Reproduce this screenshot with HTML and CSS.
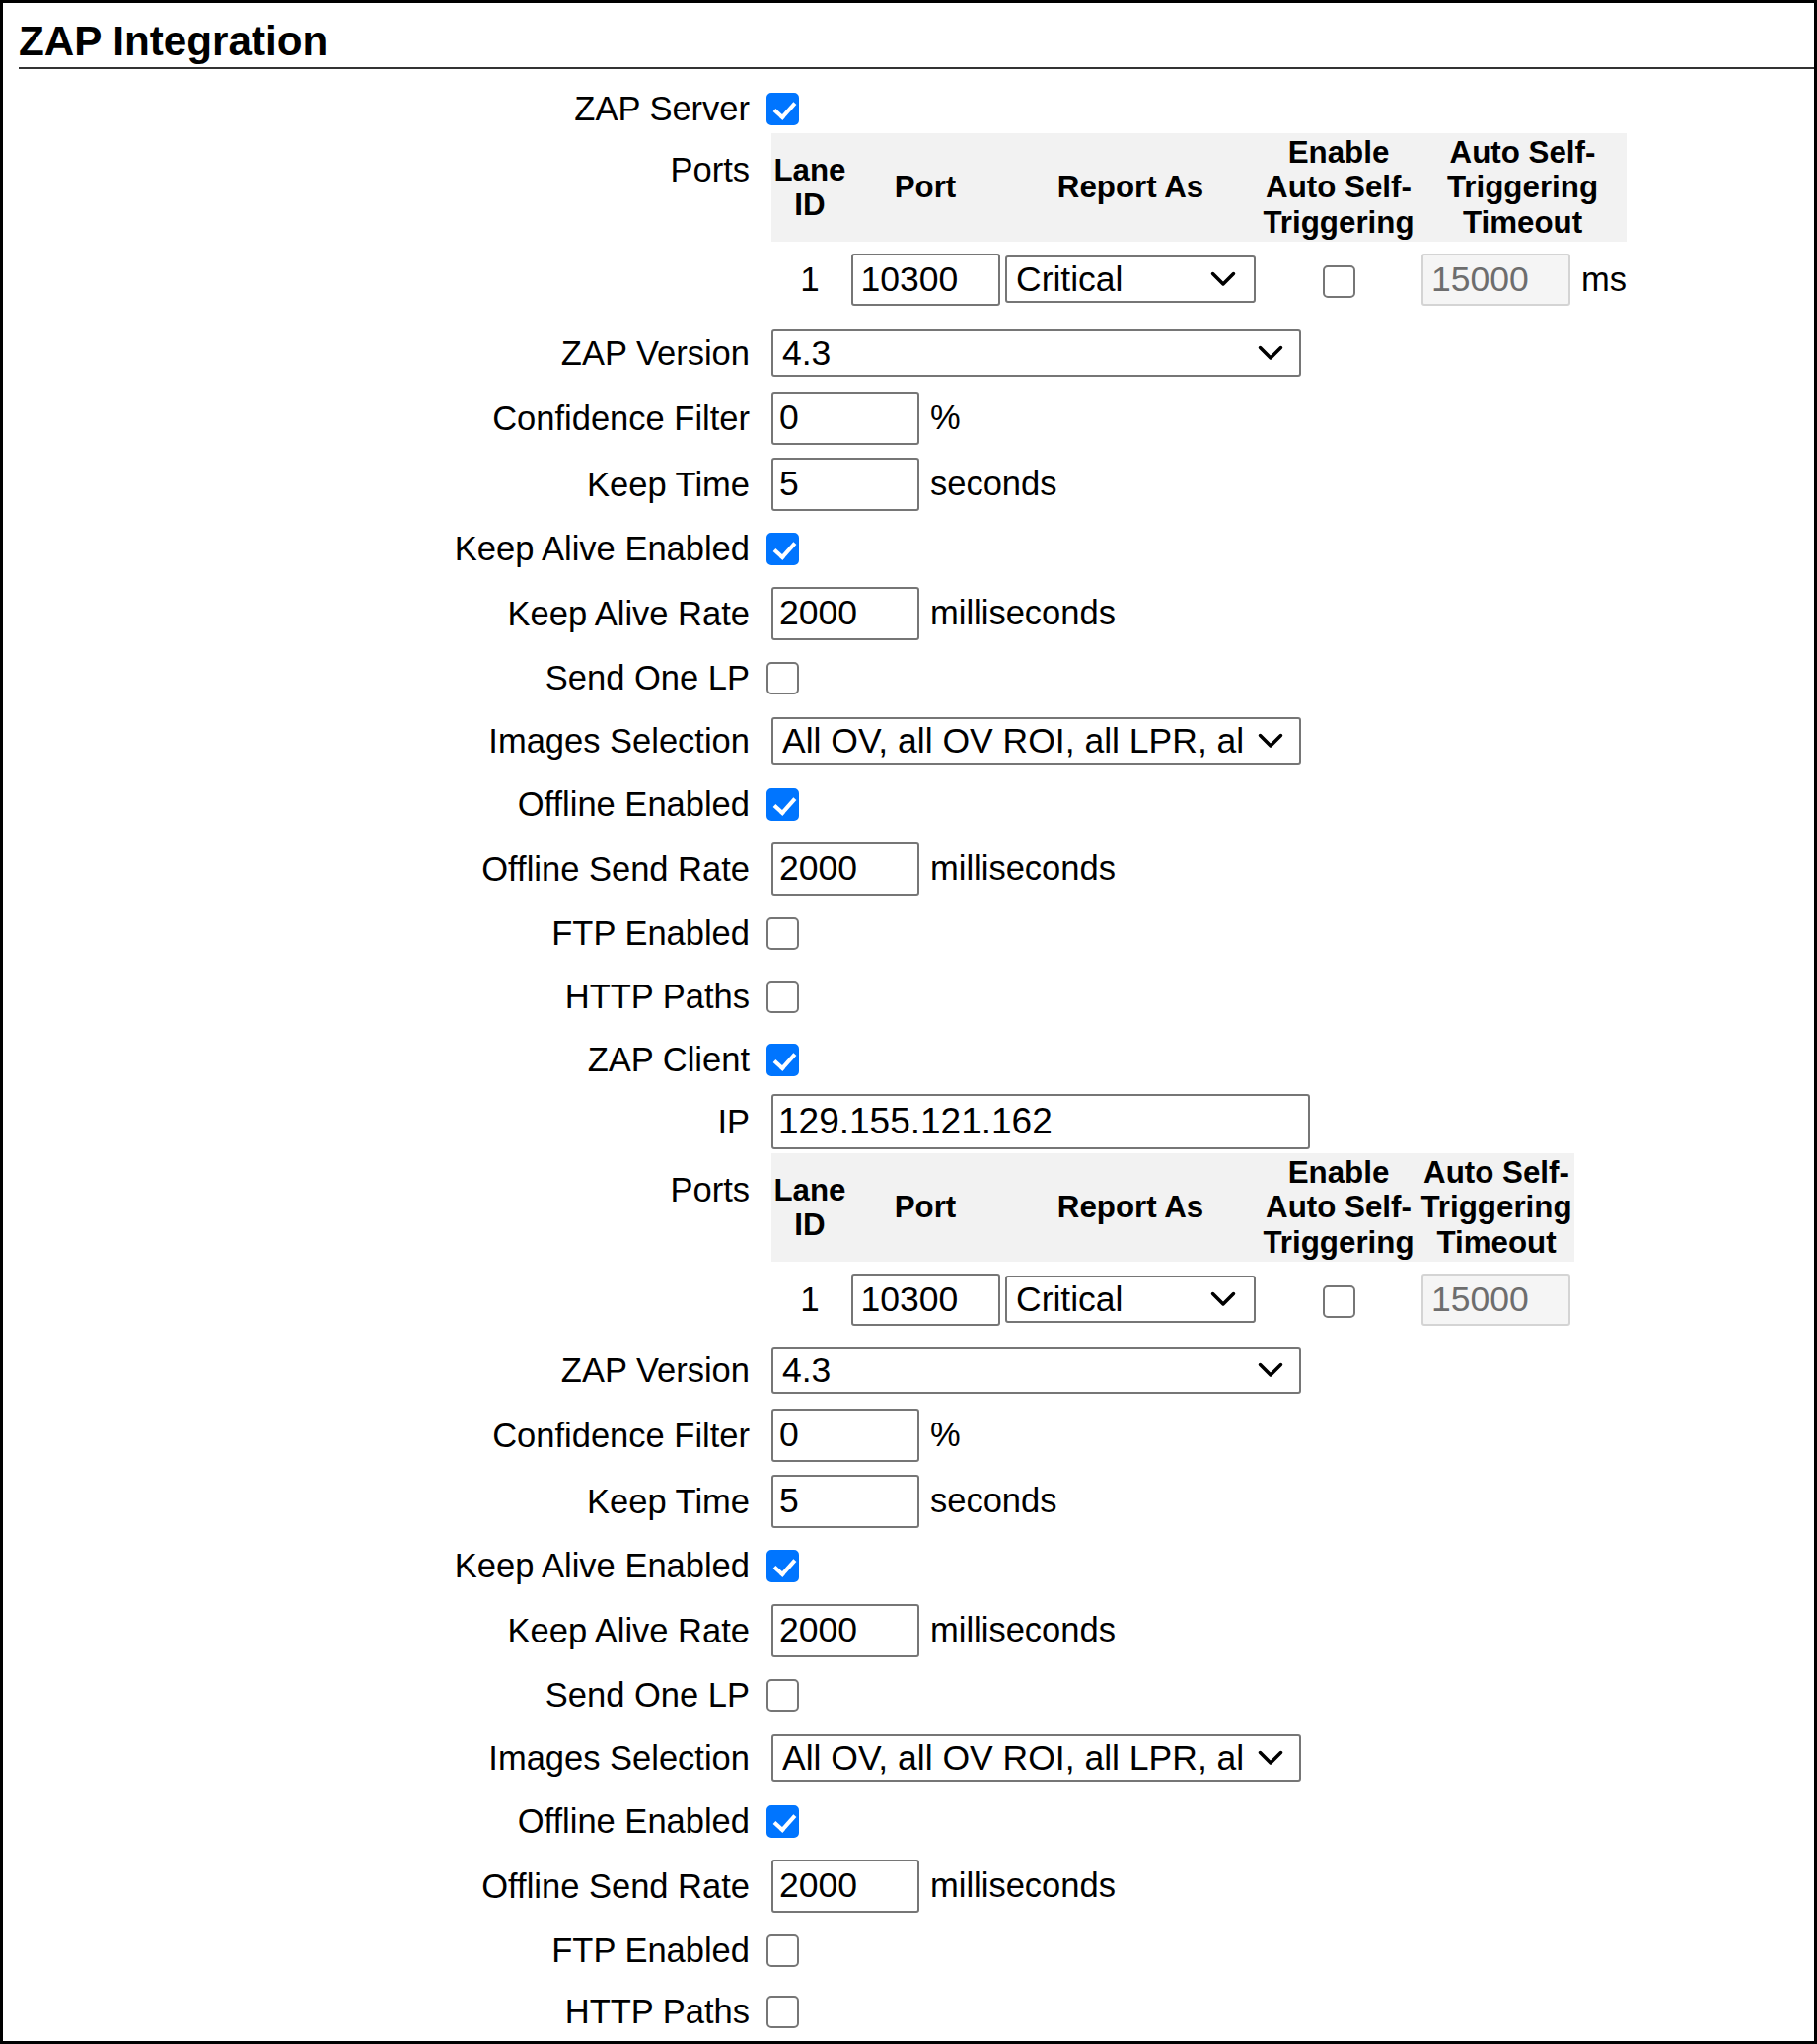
FILE: index.html
```html
<!DOCTYPE html>
<html lang="en">
<head>
<meta charset="utf-8">
<title>ZAP Integration</title>
<link rel="stylesheet" href="styles.css">
</head>
<body>
<div class="frame">
  <h2 class="title">ZAP Integration</h2>
  <div class="form">
    <div class="row h48"><div class="lbl">ZAP Server</div><input type="checkbox" class="cb" checked></div>
    <div class="row hp1">
      <div class="lbl lbl-top">Ports</div>
      <table class="ports ports1">
        <colgroup><col class="c1"><col class="c2"><col class="c3"><col class="c4"><col></colgroup>
        <thead><tr><th>Lane ID</th><th>Port</th><th>Report As</th><th>Enable Auto Self-Triggering</th><th>Auto Self-Triggering Timeout</th></tr></thead>
        <tbody><tr>
          <td class="center num">1</td>
          <td class="center"><input class="txt w-port" type="text" value="10300"></td>
          <td class="center"><div class="select w-report"><span class="sel-text">Critical</span><svg class="chev" viewBox="0 0 26 16" width="26" height="16"><path d="M2.5 2.5 L13 13 L23.5 2.5"/></svg></div></td>
          <td class="center"><input type="checkbox" class="cb cb-cell"></td>
          <td class="left-pad"><input class="txt dis w-port" type="text" value="15000" disabled><span class="unit unit-ms">ms</span></td>
        </tr></tbody>
      </table>
    </div>
    <div class="row hs"><div class="lbl">ZAP Version</div><div class="select w-wide ml"><span class="sel-text">4.3</span><svg class="chev" viewBox="0 0 26 16" width="26" height="16"><path d="M2.5 2.5 L13 13 L23.5 2.5"/></svg></div></div>
    <div class="row hi"><div class="lbl">Confidence Filter</div><input class="txt w-small ml" type="text" value="0"><span class="unit">%</span></div>
    <div class="row hi"><div class="lbl">Keep Time</div><input class="txt w-small ml" type="text" value="5"><span class="unit">seconds</span></div>
    <div class="row hc"><div class="lbl">Keep Alive Enabled</div><input type="checkbox" class="cb" checked></div>
    <div class="row hi"><div class="lbl">Keep Alive Rate</div><input class="txt w-small ml" type="text" value="2000"><span class="unit">milliseconds</span></div>
    <div class="row hc"><div class="lbl">Send One LP</div><input type="checkbox" class="cb"></div>
    <div class="row hs"><div class="lbl">Images Selection</div><div class="select w-wide ml"><span class="sel-text">All OV, all OV ROI, all LPR, al</span><svg class="chev" viewBox="0 0 26 16" width="26" height="16"><path d="M2.5 2.5 L13 13 L23.5 2.5"/></svg></div></div>
    <div class="row hc"><div class="lbl">Offline Enabled</div><input type="checkbox" class="cb" checked></div>
    <div class="row hi"><div class="lbl">Offline Send Rate</div><input class="txt w-small ml" type="text" value="2000"><span class="unit">milliseconds</span></div>
    <div class="row hc"><div class="lbl">FTP Enabled</div><input type="checkbox" class="cb"></div>
    <div class="row hc"><div class="lbl">HTTP Paths</div><input type="checkbox" class="cb"></div>

    <div class="row hc"><div class="lbl">ZAP Client</div><input type="checkbox" class="cb" checked></div>
    <div class="row hip"><div class="lbl">IP</div><input class="txt ip ml" type="text" value="129.155.121.162"></div>
    <div class="row hp2">
      <div class="lbl lbl-top">Ports</div>
      <table class="ports ports2">
        <colgroup><col class="c1"><col class="c2"><col class="c3"><col class="c4"><col></colgroup>
        <thead><tr><th>Lane ID</th><th>Port</th><th>Report As</th><th>Enable Auto Self-Triggering</th><th>Auto Self-Triggering Timeout</th></tr></thead>
        <tbody><tr>
          <td class="center num">1</td>
          <td class="center"><input class="txt w-port" type="text" value="10300"></td>
          <td class="center"><div class="select w-report"><span class="sel-text">Critical</span><svg class="chev" viewBox="0 0 26 16" width="26" height="16"><path d="M2.5 2.5 L13 13 L23.5 2.5"/></svg></div></td>
          <td class="center"><input type="checkbox" class="cb cb-cell"></td>
          <td class="left-pad"><input class="txt dis w-port" type="text" value="15000" disabled></td>
        </tr></tbody>
      </table>
    </div>
    <div class="row hs"><div class="lbl">ZAP Version</div><div class="select w-wide ml"><span class="sel-text">4.3</span><svg class="chev" viewBox="0 0 26 16" width="26" height="16"><path d="M2.5 2.5 L13 13 L23.5 2.5"/></svg></div></div>
    <div class="row hi"><div class="lbl">Confidence Filter</div><input class="txt w-small ml" type="text" value="0"><span class="unit">%</span></div>
    <div class="row hi"><div class="lbl">Keep Time</div><input class="txt w-small ml" type="text" value="5"><span class="unit">seconds</span></div>
    <div class="row hc"><div class="lbl">Keep Alive Enabled</div><input type="checkbox" class="cb" checked></div>
    <div class="row hi"><div class="lbl">Keep Alive Rate</div><input class="txt w-small ml" type="text" value="2000"><span class="unit">milliseconds</span></div>
    <div class="row hc"><div class="lbl">Send One LP</div><input type="checkbox" class="cb"></div>
    <div class="row hs"><div class="lbl">Images Selection</div><div class="select w-wide ml"><span class="sel-text">All OV, all OV ROI, all LPR, al</span><svg class="chev" viewBox="0 0 26 16" width="26" height="16"><path d="M2.5 2.5 L13 13 L23.5 2.5"/></svg></div></div>
    <div class="row hc"><div class="lbl">Offline Enabled</div><input type="checkbox" class="cb" checked></div>
    <div class="row hi"><div class="lbl">Offline Send Rate</div><input class="txt w-small ml" type="text" value="2000"><span class="unit">milliseconds</span></div>
    <div class="row hc"><div class="lbl">FTP Enabled</div><input type="checkbox" class="cb"></div>
    <div class="row hlast"><div class="lbl">HTTP Paths</div><input type="checkbox" class="cb"></div>
  </div>
</div>
</body>
</html>
```
FILE: styles.css
```css
* { box-sizing: border-box; }
html, body { margin: 0; padding: 0; background: #fff; }
body { font-family: "Liberation Sans", Arial, sans-serif; color: #000; }

.frame {
  width: 1842px;
  height: 2072px;
  border: 3px solid #000;
  overflow: hidden;
}

.title {
  margin: 15px 0 0 16px;
  font-size: 42.2px;
  font-weight: bold;
  line-height: 47px;
  padding-bottom: 3px;
  border-bottom: 2px solid #333;
}

.form { margin-top: 16px; }

.row { display: flex; align-items: center; }
.h48 { height: 48px; }
.hc { height: 64px; }
.hs { height: 64px; }
.hi { height: 67px; }
.hip { height: 62px; }
.hp1 { height: 192px; align-items: flex-start; }
.hp2 { height: 189px; align-items: flex-start; }
.hlast { height: 60px; }

.lbl {
  flex: none;
  width: 757px;
  margin-right: 17px;
  text-align: right;
  font-size: 34.5px;
  line-height: 38px;
  white-space: nowrap;
}
.lbl-top { padding-top: 19px; }

/* checkbox */
.cb {
  -webkit-appearance: none;
  appearance: none;
  position: relative;
  width: 33px;
  height: 33px;
  margin: 0;
  border: 2px solid #767676;
  border-radius: 5px;
  background: #fff;
  flex: none;
}
.cb:checked {
  background: #0075ff;
  border-color: #0075ff;
}
.cb:checked::after {
  content: "";
  position: absolute;
  left: 10px;
  top: 3px;
  width: 9px;
  height: 17px;
  border: solid #fff;
  border-width: 0 4.5px 4.5px 0;
  transform: rotate(42deg);
}
.cb-cell { vertical-align: middle; }

/* text inputs */
.txt {
  height: 54px;
  margin: 0;
  border: 2px solid #767676;
  border-radius: 3px;
  padding: 0 6px;
  font-family: "Liberation Sans", Arial, sans-serif;
  font-size: 35.5px;
  color: #000;
  background: #fff;
  outline: none;
  flex: none;
}
.w-small { width: 150px; }
.w-port { width: 151px; height: 53px; padding: 0 8px; }
.ip { width: 546px; height: 56px; padding: 0 5px; font-size: 37px; }
.dis {
  background: #f5f5f5;
  border-color: #d4d4d4;
  color: #6d6d6d;
  -webkit-text-fill-color: #6d6d6d;
}

.ml { margin-left: 5px; }

.unit {
  margin-left: 11px;
  font-size: 34.5px;
  white-space: nowrap;
}
.unit-ms { margin-left: 11px; vertical-align: middle; }

/* select-like control */
.select {
  display: flex;
  align-items: center;
  justify-content: space-between;
  height: 48px;
  border: 2px solid #767676;
  border-radius: 3px;
  padding: 0 16px 0 9px;
  background: #fff;
  font-size: 35.5px;
  flex: none;
}
.sel-text {
  white-space: nowrap;
  overflow: hidden;
}
.chev {
  flex: none;
  margin-left: 4px;
}
.chev path {
  fill: none;
  stroke: #000;
  stroke-width: 3.5;
  stroke-linecap: round;
  stroke-linejoin: round;
}
.w-wide { width: 537px; }
.w-report { width: 254px; display: inline-flex; vertical-align: middle; padding-right: 18px; }

/* ports table */
.ports {
  margin: 1px 0 0 5px;
  border-collapse: collapse;
  table-layout: fixed;
  flex: none;
}
.ports1 { width: 867px; }
.ports2 { width: 814px; }
.c1 { width: 78px; }
.c2 { width: 156px; }
.c3 { width: 260px; }
.c4 { width: 162px; }

.ports th {
  height: 110px;
  padding: 0;
  background: #f2f2f2;
  font-size: 31.3px;
  font-weight: bold;
  line-height: 35.5px;
  text-align: center;
  vertical-align: middle;
}
.ports td {
  height: 76px;
  padding: 0;
  vertical-align: middle;
  font-size: 35px;
}
.ports td.center { text-align: center; }
.ports td.left-pad { text-align: left; padding-left: 3px; white-space: nowrap; }
.ports td .txt { vertical-align: middle; }
```
